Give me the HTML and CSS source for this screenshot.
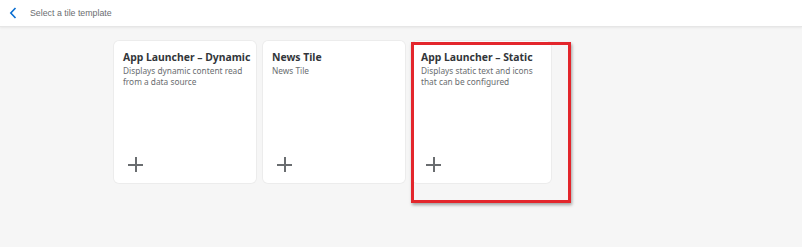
FILE: index.html
```html
<!DOCTYPE html>
<html>
	<head>
		<meta charset="utf-8">
		<title>Select a tile template</title>
		<link rel="stylesheet" href="styles.css">
	</head>
	<body>
		<div class="header">
			<span class="back">
				<svg width="8" height="12" viewBox="0 0 8 12"><path d="M6.5 1 L1.8 6 L6.5 11" fill="none" stroke="#0a6ed1" stroke-width="1.6"/></svg>
			</span>
			<span class="title">Select a tile template</span>
		</div>
		<div class="main">
			<div class="tiles">
				<div class="tile">
					<div class="tile-title">App Launcher – Dynamic</div>
					<div class="tile-desc">Displays dynamic content read from a data source</div>
					<div class="plus"></div>
				</div>
				<div class="tile">
					<div class="tile-title">News Tile</div>
					<div class="tile-desc">News Tile</div>
					<div class="plus"></div>
				</div>
				<div class="tile marked">
					<div class="tile-title">App Launcher – Static</div>
					<div class="tile-desc">Displays static text and icons that can be configured</div>
					<div class="plus"></div>
				</div>
				<!-- red frame drawn over the selected tile -->
				<div class="highlight"></div>
			</div>
		</div>
	</body>
</html>
```
FILE: styles.css
```css
html,body{height: 100%;}
body{
	margin: 0;
	background: #f6f6f6;
	font-family: "Liberation Sans", Arial, sans-serif;
}
.header{
	height: 26px;
	background: #fff;
	border-bottom: 1px solid #e6e6e6;
	box-shadow: 0 1px 2px rgba(0,0,0,0.06);
	display: flex;
	align-items: center;
	padding-left: 9px;
}
.back{
	display: flex;
	width: 8px;
	height: 12px;
	margin-right: 13px;
}
.title{
	font-size: 8.8px;
	color: #6a6d70;
}
.main{
	padding: 14px 0 40px 114px;
}
.tiles{
	position: relative;
	display: flex;
	gap: 7px;
}
.tile{
	width: 142px;
	height: 142px;
	box-sizing: border-box;
	padding: 9px 9px 0 9px;
	background: #fff;
	border-radius: 5px;
	box-shadow: 0 0 0 1px rgba(0,0,0,0.04);
	display: flex;
	flex-direction: column;
}
.marked{width: 139px;}
.tile-title{
	font-family: "Noto Sans", sans-serif;
	font-weight: bold;
	font-size: 10.4px;
	color: #32363a;
	line-height: 15px;
	white-space: nowrap;
}
.tile-desc{
	font-family: "Noto Sans", sans-serif;
	font-size: 8.3px;
	color: #6a6d70;
	line-height: 10.5px;
	margin-top: 1px;
	width: 124px;
}
.plus{
	position: relative;
	width: 15px;
	height: 15px;
	margin: auto 0 11px 5px;
}
.plus:before,.plus:after{
	content: "";
	position: absolute;
	background: #6a6d70;
}
.plus:before{left: 0;top: 7px;width: 15px;height: 2px;}
.plus:after{left: 7px;top: 0;width: 2px;height: 15px;}
.highlight{
	position: absolute;
	left: 297px;
	top: 1px;
	width: 160px;
	height: 161px;
	box-sizing: border-box;
	border: 3px solid #e3262c;
	box-shadow: 1px 2px 3px rgba(0,0,0,0.35);
}
```
